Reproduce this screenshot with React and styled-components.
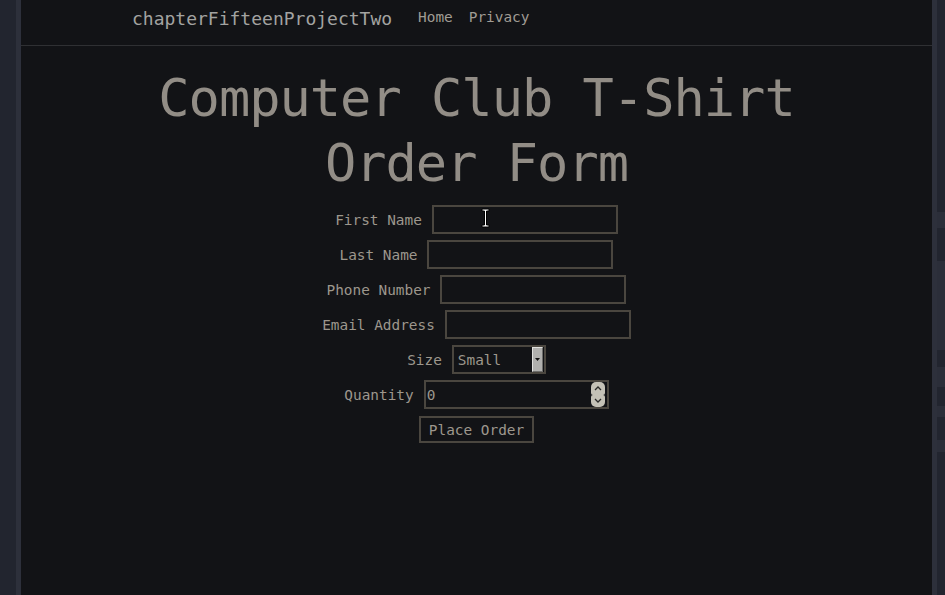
import React from "react";
import styled, { createGlobalStyle } from "styled-components";

const Global = createGlobalStyle`
  html, body { margin: 0; padding: 0; background: #121316; }
  body { font-family: "DejaVu Sans Mono", "Liberation Mono", monospace; }
  * { box-sizing: border-box; }
`;

const Frame = styled.div`
  display: flex;
  width: 945px;
  height: 595px;
  overflow: hidden;
  position: relative;
`;

const Rail = styled.div`
  width: ${(p) => p.$w}px;
  flex: none;
  background: ${(p) => p.$bg};
`;

const RightRail = styled.div`
  width: 8px;
  flex: none;
  display: flex;
  flex-direction: column;
  background: #2b2e39;
`;

const RailBlock = styled.div`
  height: ${(p) => p.$h}px;
  flex: none;
  background: ${(p) => (p.$dark ? "#22252f" : "transparent")};
`;

const Main = styled.div`
  flex: 1;
  background: #121316;
  display: flex;
  flex-direction: column;
`;

const NavBar = styled.nav`
  border-bottom: 1px solid #2f3033;
  padding: 5px 0 13px;
`;

const NavInner = styled.div`
  width: 689px;
  margin: 0 auto;
  display: flex;
  align-items: center;
`;

const Brand = styled.a`
  font-size: 18px;
  line-height: 27px;
  color: #a3a3a1;
  margin-right: 26px;
  text-decoration: none;
`;

const NavLinks = styled.div`
  display: flex;
  gap: 16px;
  margin-top: -2px;
`;

const NavLink = styled.a`
  font-size: 14.4px;
  line-height: 21.6px;
  color: #a09c94;
  text-decoration: none;
`;

const Title = styled.h1`
  margin: 20px 0 9px;
  text-align: center;
  font-weight: normal;
  font-size: 52px;
  letter-spacing: -1px;
  line-height: 65px;
  color: #928d86;
`;

const Form = styled.form`
  display: flex;
  flex-direction: column;
  align-items: center;
  gap: 6px;
`;

const Row = styled.div`
  display: flex;
  align-items: center;
  gap: 10px;
  height: 29px;
`;

const Label = styled.label`
  font-size: 14.4px;
  color: #9d978d;
  white-space: pre;
`;

const TextInput = styled.input`
  width: 186px;
  height: 29px;
  background: #121316;
  border: 2px solid #4a463f;
  color: #9d978d;
  font-family: inherit;
  font-size: 14.4px;
  padding: 0 3px;
  outline: none;
`;

const Box = styled.div`
  display: flex;
  align-items: stretch;
  width: ${(p) => p.$w}px;
  height: 29px;
  border: 2px solid #4a463f;
  padding: 0 1px 0 0;
  background: #121316;
`;

const BareSelect = styled.select`
  flex: 1;
  min-width: 0;
  appearance: none;
  background: transparent;
  border: none;
  color: #9d978d;
  font-family: inherit;
  font-size: 14.4px;
  padding: 0 4px;
  outline: none;
`;

const ArrowButton = styled.span`
  width: 11px;
  flex: none;
  background: #b0b0ae;
  border-top: 1px solid #e0e0de;
  border-left: 1px solid #e0e0de;
  border-right: 1px solid #6e6e6c;
  border-bottom: 1px solid #6e6e6c;
  display: flex;
  align-items: center;
  justify-content: center;
`;

const BareNumber = styled.input`
  flex: 1;
  min-width: 0;
  background: transparent;
  border: none;
  color: #9d978d;
  font-family: inherit;
  font-size: 14.4px;
  padding: 0 1px;
  outline: none;
  appearance: textfield;
  -moz-appearance: textfield;
  &::-webkit-inner-spin-button,
  &::-webkit-outer-spin-button {
    -webkit-appearance: none;
    margin: 0;
  }
`;

const Spinner = styled.div`
  width: 14px;
  flex: none;
  display: flex;
  flex-direction: column;
  justify-content: center;
  margin-right: 1px;
`;

const SpinBtn = styled.span`
  height: 13px;
  background: #c4c1b6;
  border-radius: ${(p) => (p.$up ? "5px 5px 2px 2px" : "2px 2px 5px 5px")};
  display: flex;
  align-items: center;
  justify-content: center;
`;

const Submit = styled.button`
  height: 27px;
  background: transparent;
  border: 2px solid #4a463f;
  color: #9d978d;
  font-family: inherit;
  font-size: 14.4px;
  padding: 0 8px;
`;

const Cursor = styled.svg`
  position: absolute;
  left: 481px;
  top: 208px;
  pointer-events: none;
`;

export default function App() {
  return (
    <>
      <Global />
      <Frame>
        <Rail $w={16} $bg="#22252f" />
        <Rail $w={5} $bg="#2d303b" />
        <Main>
          <NavBar>
            <NavInner>
              <Brand href="#">chapterFifteenProjectTwo</Brand>
              <NavLinks>
                <NavLink href="#">Home</NavLink>
                <NavLink href="#">Privacy</NavLink>
              </NavLinks>
            </NavInner>
          </NavBar>
          <Title>
            Computer Club T-Shirt
            <br />
            Order Form
          </Title>
          <Form onSubmit={(e) => e.preventDefault()}>
            <Row>
              <Label>First Name</Label>
              <TextInput type="text" />
            </Row>
            <Row>
              <Label>Last Name</Label>
              <TextInput type="text" />
            </Row>
            <Row>
              <Label>Phone Number</Label>
              <TextInput type="text" />
            </Row>
            <Row>
              <Label>Email Address</Label>
              <TextInput type="text" />
            </Row>
            <Row>
              <Label>Size</Label>
              <Box $w={94}>
                <BareSelect defaultValue="Small">
                  <option>Small</option>
                  <option>Medium</option>
                  <option>Large</option>
                </BareSelect>
                <ArrowButton>
                  <svg width="5" height="3" viewBox="0 0 5 3">
                    <path d="M0 0h5L2.5 3z" fill="#111" />
                  </svg>
                </ArrowButton>
              </Box>
            </Row>
            <Row>
              <Label>Quantity</Label>
              <Box $w={185}>
                <BareNumber type="number" defaultValue="0" />
                <Spinner>
                  <SpinBtn $up>
                    <svg width="8" height="5" viewBox="0 0 8 5">
                      <path d="M1 4L4 1l3 3" stroke="#2a2a28" strokeWidth="1.3" fill="none" />
                    </svg>
                  </SpinBtn>
                  <SpinBtn>
                    <svg width="8" height="5" viewBox="0 0 8 5">
                      <path d="M1 1l3 3 3-3" stroke="#2a2a28" strokeWidth="1.3" fill="none" />
                    </svg>
                  </SpinBtn>
                </Spinner>
              </Box>
            </Row>
            <Row>
              <Submit type="submit">Place Order</Submit>
            </Row>
          </Form>
        </Main>
        <Rail $w={5} $bg="#2d303b" />
        <RightRail>
          <RailBlock $h={212} $dark />
          <RailBlock $h={16} />
          <RailBlock $h={33} $dark />
          <RailBlock $h={89} />
          <RailBlock $h={17} $dark />
          <RailBlock $h={20} />
          <RailBlock $h={19} $dark />
          <RailBlock $h={11} />
          <RailBlock $h={23} $dark />
          <RailBlock $h={12} />
          <RailBlock $h={143} $dark />
        </RightRail>
        <Cursor width="9" height="20" viewBox="0 0 9 20">
          <path
            d="M1 1h7v2H5.5v14H8v2H1v-2h2.5V3H1z"
            fill="#fff"
            stroke="#000"
            strokeWidth="1"
          />
        </Cursor>
      </Frame>
    </>
  );
}
